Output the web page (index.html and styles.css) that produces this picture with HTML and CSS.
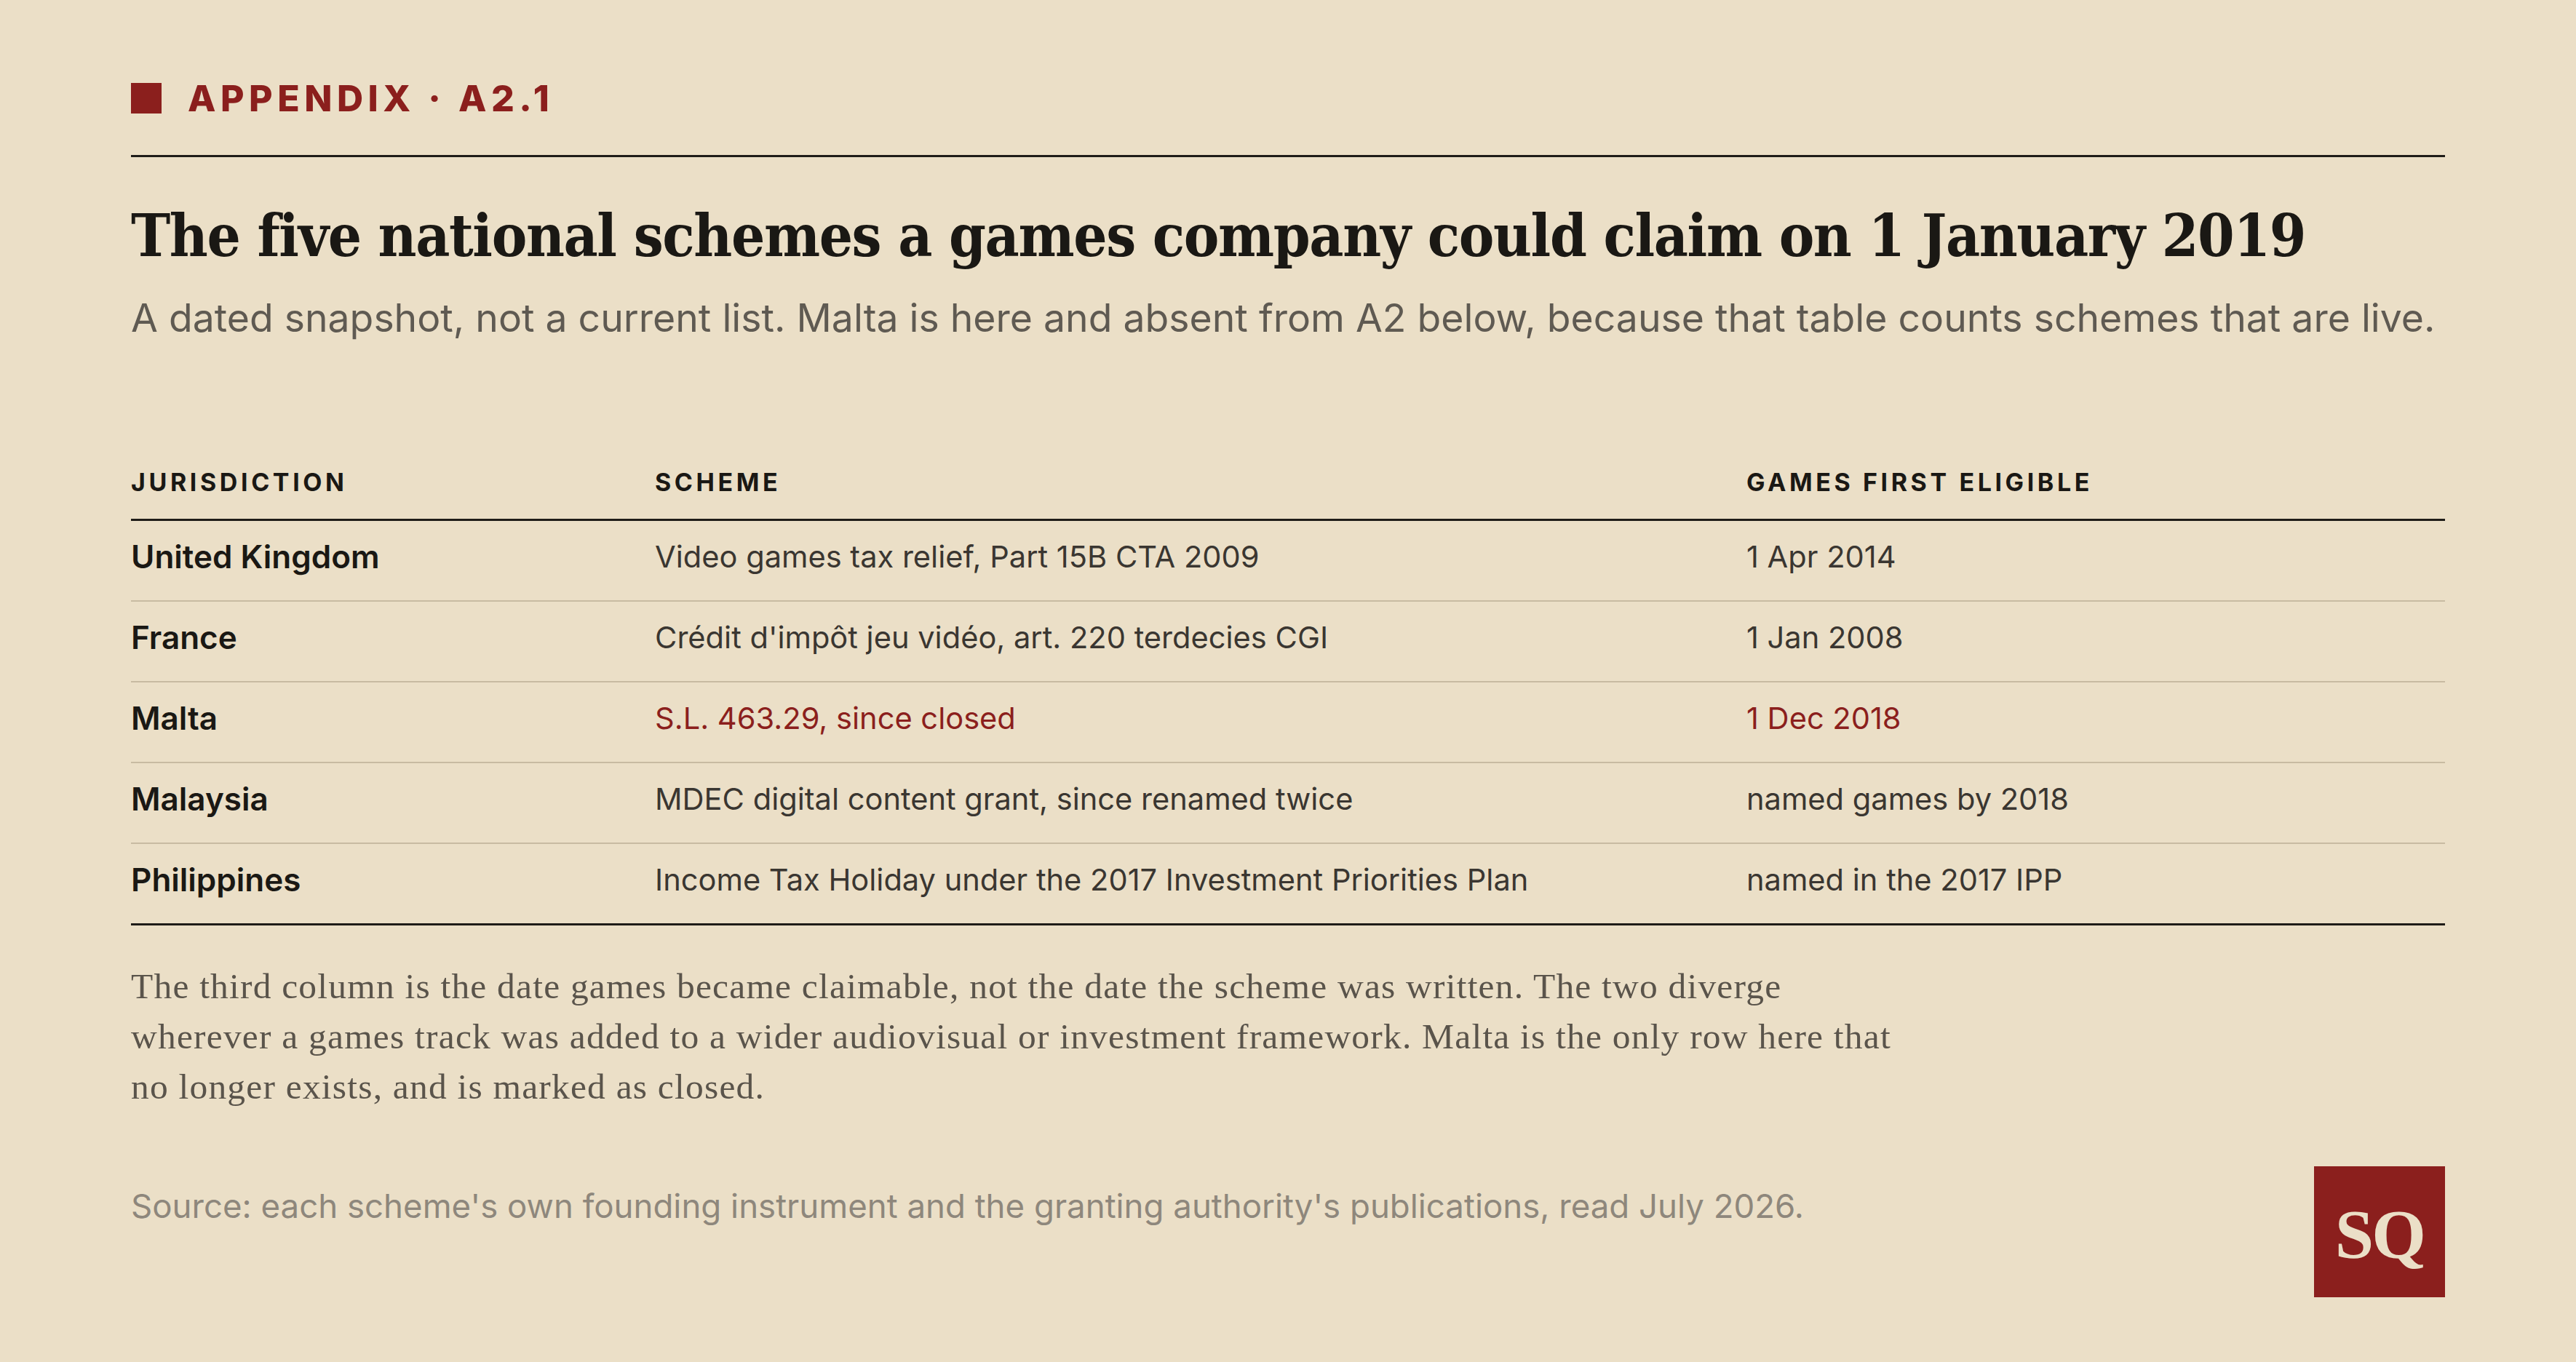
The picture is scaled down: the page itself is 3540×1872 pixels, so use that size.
FILE: index.html
```html
<!DOCTYPE html>
<html lang="en">
<head>
<meta charset="utf-8">
<title>Appendix A2.1</title>
<link rel="stylesheet" href="styles.css">
</head>
<body>
<main class="page">
  <header class="kicker">
    <span class="kicker-mark"></span>
    <span class="kicker-text">APPENDIX · A2.1</span>
  </header>
  <h1 class="title">The five national schemes a games company could claim on 1 January 2019</h1>
  <p class="subtitle">A dated snapshot, not a current list. Malta is here and absent from A2 below, because that table counts schemes that are live.</p>

  <div class="table">
    <div class="row head">
      <div class="cell">JURISDICTION</div>
      <div class="cell">SCHEME</div>
      <div class="cell">GAMES FIRST ELIGIBLE</div>
    </div>
    <div class="row">
      <div class="cell name">United Kingdom</div>
      <div class="cell">Video games tax relief, Part 15B CTA 2009</div>
      <div class="cell">1 Apr 2014</div>
    </div>
    <div class="row">
      <div class="cell name">France</div>
      <div class="cell">Crédit d'impôt jeu vidéo, art. 220 terdecies CGI</div>
      <div class="cell">1 Jan 2008</div>
    </div>
    <div class="row closed">
      <div class="cell name">Malta</div>
      <div class="cell">S.L. 463.29, since closed</div>
      <div class="cell">1 Dec 2018</div>
    </div>
    <div class="row">
      <div class="cell name">Malaysia</div>
      <div class="cell">MDEC digital content grant, since renamed twice</div>
      <div class="cell">named games by 2018</div>
    </div>
    <div class="row last">
      <div class="cell name">Philippines</div>
      <div class="cell">Income Tax Holiday under the 2017 Investment Priorities Plan</div>
      <div class="cell">named in the 2017 IPP</div>
    </div>
  </div>

  <p class="note">The third column is the date games became claimable, not the date the scheme was written. The two diverge<br>wherever a games track was added to a wider audiovisual or investment framework. Malta is the only row here that<br>no longer exists, and is marked as closed.</p>

  <footer class="footer">
    <p class="source">Source: each scheme's own founding instrument and the granting authority's publications, read July 2026.</p>
    <div class="logo">SQ</div>
  </footer>
</main>
</body>
</html>
```

FILE: styles.css
```css
html, body {
  margin: 0;
  padding: 0;
  background: #ebdfc7;
}

.page {
  box-sizing: border-box;
  width: 3540px;
  height: 1872px;
  padding: 114px 180px 0 180px;
  font-family: Inter, "Liberation Sans", sans-serif;
  color: #1a1814;
}

.kicker {
  display: flex;
  align-items: center;
  gap: 36px;
  height: 42px;
  padding-bottom: 57px;
  border-bottom: 3px solid #1f1c18;
}

.kicker-mark {
  width: 42px;
  height: 42px;
  background: #8b1f1d;
  flex: none;
}

.kicker-text {
  font-size: 50px;
  font-weight: 800;
  letter-spacing: 0.13em;
  color: #8b1f1d;
  line-height: 42px;
}

.title {
  margin: 59px 0 0 0;
  font-family: "DejaVu Serif Condensed", "DejaVu Serif", serif;
  font-stretch: condensed;
  font-weight: 700;
  font-size: 81px;
  line-height: 98px;
  letter-spacing: -0.017em;
  color: #1a1814;
}

.subtitle {
  margin: 30px 0 0 0;
  font-size: 53.5px;
  line-height: 68px;
  color: #5f5a52;
}

.table {
  margin-top: 171px;
}

.row {
  display: grid;
  grid-template-columns: 720px 1500px 1fr;
  border-bottom: 2px solid #c8bba2;
  padding: 20px 0 31px 0;
  font-size: 41.6px;
  line-height: 58px;
  color: #3a3631;
}

.row.head {
  padding: 0 0 30px 0;
  font-size: 34px;
  line-height: 41px;
  font-weight: 700;
  letter-spacing: 0.135em;
  color: #1a1814;
  border-bottom: 3px solid #1f1c18;
}

.row.last {
  border-bottom: 3px solid #1f1c18;
}

.cell.name {
  font-size: 44px;
  font-weight: 600;
  color: #1a1814;
}

.row.closed .cell {
  color: #8b1f1d;
}

.row.closed .cell.name {
  color: #1a1814;
}

.note {
  margin: 49px 0 0 0;
  max-width: 2800px;
  font-family: "Liberation Serif", serif;
  font-size: 49.5px;
  letter-spacing: 1.2px;
  line-height: 69px;
  color: #5a544b;
}

.footer {
  display: flex;
  justify-content: space-between;
  align-items: flex-start;
  margin-top: 75px;
}

.source {
  margin: 26px 0 0 0;
  font-size: 45.6px;
  line-height: 58px;
  color: #8e877c;
}

.logo {
  width: 180px;
  height: 180px;
  flex: none;
  background: #8b1f1d;
  color: #ebdfc7;
  display: flex;
  align-items: center;
  justify-content: center;
  font-family: "Liberation Serif", serif;
  font-weight: 700;
  font-size: 96px;
  letter-spacing: -0.03em;
  padding-top: 6px;
  box-sizing: border-box;
}
```
